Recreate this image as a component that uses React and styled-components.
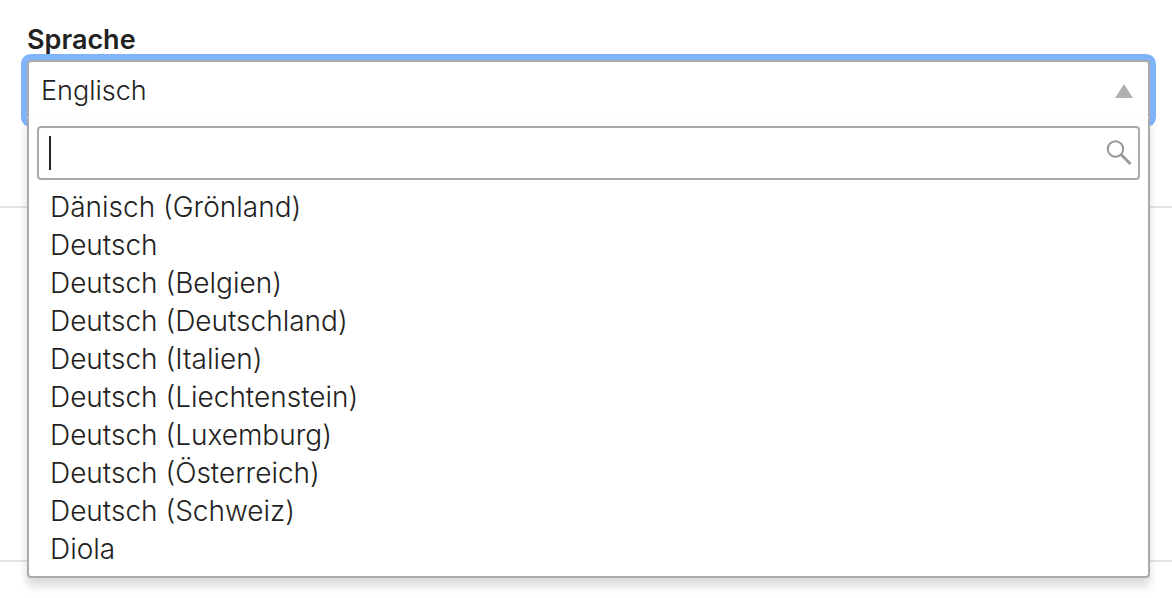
import React, { useState } from "react";
import styled, { createGlobalStyle } from "styled-components";

const languages = [
  "Dänisch (Grönland)",
  "Deutsch",
  "Deutsch (Belgien)",
  "Deutsch (Deutschland)",
  "Deutsch (Italien)",
  "Deutsch (Liechtenstein)",
  "Deutsch (Luxemburg)",
  "Deutsch (Österreich)",
  "Deutsch (Schweiz)",
  "Diola",
];

const GlobalStyle = createGlobalStyle`
  *,
  *::before,
  *::after {
    box-sizing: border-box;
  }
  body {
    margin: 0;
    background-color: #fff;
    color: #222;
    font-family: Inter, "Liberation Sans", sans-serif;
    font-size: 27px;
    font-weight: 300;
    line-height: 38px;
  }
`;

const Page = styled.main`
  min-height: 100vh;
`;

const Section = styled.section`
  min-height: ${(props) => (props.$tall ? "354px" : "208px")};
  padding: 20px 22px 0 27px;
  border-bottom: 2px solid #e4e4e4;
`;

const Label = styled.label`
  display: block;
  font-weight: 600;
  line-height: 40px;
`;

const Select = styled.div`
  position: relative;
`;

const Trigger = styled.button`
  position: relative;
  display: flex;
  align-items: center;
  justify-content: space-between;
  width: 100%;
  height: 61px;
  padding: 0 15px 0 12px;
  border: 2px solid #aaa;
  border-radius: 4px;
  background-color: #fff;
  box-shadow: 0 0 0 6px #80b3f9;
  color: inherit;
  font: inherit;
  text-align: left;
  outline: none;
  cursor: pointer;
`;

const Arrow = styled.svg`
  width: 18px;
  height: 14px;
  fill: #b0b0b0;
  transform: ${(props) => (props.$open ? "none" : "rotate(180deg)")};
`;

const Dropdown = styled.div`
  position: absolute;
  top: 57px;
  left: 0;
  right: 0;
  z-index: 1;
  padding: 8px;
  border: 2px solid #aaa;
  border-top: 1px solid #fafafa;
  border-radius: 0 0 4px 4px;
  background-color: #fff;
  box-shadow: 0 8px 10px rgba(0, 0, 0, 0.15);
`;

const Search = styled.div`
  position: relative;
  display: flex;
  align-items: center;
  height: 54px;
  padding-right: 5px;
  border: 2px solid #aaa;
  border-radius: 4px;
`;

const SearchInput = styled.input`
  flex: 1;
  min-width: 0;
  height: 100%;
  padding: 0 10px;
  border: none;
  background: transparent;
  color: inherit;
  font: inherit;
  outline: none;
  caret-color: transparent;
`;

const Caret = styled.span`
  position: absolute;
  top: 8px;
  left: 10px;
  width: 2px;
  height: 34px;
  background-color: #222;
`;

const SearchIcon = styled.svg`
  width: 28px;
  height: 28px;
  fill: none;
  stroke: #999;
`;

const Options = styled.ul`
  margin: 8px 0 0;
  padding: 0;
  list-style: none;
  font-size: 28px;
`;

const Option = styled.li`
  padding: 0 13px;
  cursor: pointer;
`;

const App = () => {
  const [open, setOpen] = useState(true);
  const [selected, setSelected] = useState("Englisch");
  const [query, setQuery] = useState("");

  const handleSelect = (language) => {
    setSelected(language);
    setQuery("");
    setOpen(false);
  };

  return (
    <Page>
      <GlobalStyle />
      <Section>
        <Label htmlFor="language">Sprache</Label>
        <Select>
          <Trigger
            id="language"
            type="button"
            aria-haspopup="listbox"
            aria-expanded={open}
            onClick={() => setOpen(!open)}
          >
            {selected}
            <Arrow $open={open} viewBox="0 0 18 14" aria-hidden="true">
              <path d="M9 0L18 14H0Z" />
            </Arrow>
          </Trigger>
          {open && (
            <Dropdown>
              <Search>
                <SearchInput
                  type="text"
                  aria-label="Sprache"
                  autoComplete="off"
                  value={query}
                  onChange={(e) => setQuery(e.target.value)}
                />
                {!query && <Caret />}
                <SearchIcon viewBox="0 0 28 28" aria-hidden="true">
                  <circle cx="10.5" cy="10" r="7.7" strokeWidth="2" />
                  <path d="M16 15.5L25.5 25" strokeWidth="3" />
                </SearchIcon>
              </Search>
              <Options role="listbox" aria-label="Sprache">
                {languages
                  .filter((l) => l.toLowerCase().includes(query.toLowerCase()))
                  .map((language) => (
                    <Option
                      key={language}
                      role="option"
                      aria-selected={language === selected}
                      onClick={() => handleSelect(language)}
                    >
                      {language}
                    </Option>
                  ))}
              </Options>
            </Dropdown>
          )}
        </Select>
      </Section>
      <Section $tall />
    </Page>
  );
};

export default App;
